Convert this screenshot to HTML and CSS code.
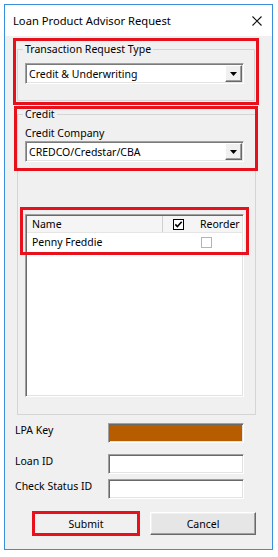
FILE: index.html
```html
<!DOCTYPE html>
<html lang="en">
<head>
  <meta charset="UTF-8">
  <meta name="viewport" content="width=device-width, initial-scale=1.0">
  <title>Loan Product Advisor Request</title>
  <link rel="stylesheet" href="styles.css">
</head>
<body>
  <div class="window">
    <div class="titlebar">
      <span class="title">Loan Product Advisor Request</span>
      <span class="close">
        <svg width="10" height="10" viewBox="0 0 10 10"><path d="M0.5 0.5 L9.5 9.5 M9.5 0.5 L0.5 9.5" stroke="#111" stroke-width="1.1" fill="none"/></svg>
      </span>
    </div>

    <div class="client">
      <fieldset class="group group-type">
        <legend>Transaction Request Type</legend>
        <div class="combo">
          <span class="combo-text">Credit &amp; Underwriting</span>
          <span class="combo-btn"><svg width="7" height="4" viewBox="0 0 7 4"><polygon points="0,0 7,0 3.5,4" fill="#000"/></svg></span>
        </div>
      </fieldset>

      <fieldset class="group group-credit">
        <legend>Credit</legend>
        <div class="credit-top">
          <label class="caption">Credit Company</label>
          <div class="combo">
            <span class="combo-text">CREDCO/Credstar/CBA</span>
            <span class="combo-btn"><svg width="7" height="4" viewBox="0 0 7 4"><polygon points="0,0 7,0 3.5,4" fill="#000"/></svg></span>
          </div>
        </div>

        <div class="listview">
          <div class="lv-head">
            <span class="col-name">Name</span>
            <span class="col-reorder">
              <svg class="head-check" width="11" height="11" viewBox="0 0 11 11"><rect x="0.5" y="0.5" width="10" height="10" fill="#fff" stroke="#000"/><path d="M2.3 5.4 L4.4 7.6 L8.7 2.8" stroke="#000" stroke-width="1.6" fill="none"/></svg>
              <span class="reorder-text">Reorder</span>
            </span>
          </div>
          <div class="lv-row">
            <span class="col-name">Penny Freddie</span>
            <span class="col-reorder"><span class="checkbox"></span></span>
          </div>
        </div>
      </fieldset>

      <div class="field field-key">
        <span class="field-label">LPA Key</span>
        <span class="textbox textbox-key"></span>
      </div>
      <div class="field field-loan">
        <span class="field-label">Loan ID</span>
        <span class="textbox"></span>
      </div>
      <div class="field field-status">
        <span class="field-label">Check Status ID</span>
        <span class="textbox"></span>
      </div>

      <div class="buttons">
        <button class="btn btn-submit">Submit</button>
        <button class="btn">Cancel</button>
      </div>
    </div>
  </div>
</body>
</html>
```

FILE: styles.css
```css
*, *::before, *::after { box-sizing: border-box; }
body { margin: 0; padding: 4px 0 0 4px; background: #fff; font-family: "Noto Sans", "Liberation Sans", sans-serif; font-size: 10.5px; color: #000; }

.window { width: 269px; height: 546px; border: 1px solid #3a8fdc; display: flex; flex-direction: column; }
.titlebar { height: 31px; flex: none; background: #fff; display: flex; align-items: center; justify-content: space-between; padding: 0 10px 0 8px; }
.title { font-size: 11.2px; line-height: 14px; }
.close { display: flex; margin-top: 1px; }

.client { flex: 1; background: #f0f0f0; padding: 6px 0 0 10px; }

/* group boxes */
.group { margin: 0 0 0 2px; border: 1px solid #d5d5d5; min-inline-size: 0; }
.group legend { padding: 0 2px; margin-left: -2px; line-height: 14px; }
.group-type { width: 238px; padding: 6px 10px 16px 7px; outline: 3px solid #e8101a; outline-offset: 1px; }
.group-credit { width: 239px; margin-top: 6px; padding: 0 10px 17px 7px; }

.credit-top { position: relative; }
.credit-top::before { content: ""; position: absolute; top: -20px; left: -11px; width: 244px; height: 65px; border: 3px solid #e8101a; }
.caption { display: block; line-height: 14px; margin-top: 5px; }

/* combo */
.combo { width: 219px; height: 21px; margin-top: 1px; background: #fff; display: flex; align-items: center; justify-content: space-between;
  border: 1px solid; border-color: #a0a0a0 #fff #fff #a0a0a0; box-shadow: inset 1px 1px #7a7a7a, inset -1px -1px #e3e3e3; }
.combo-text { padding-left: 3px; line-height: 14px; }
.combo-btn { width: 17px; height: 17px; margin-right: 1px; display: flex; align-items: center; justify-content: center; background: #f0f0f0;
  border: 1px solid; border-color: #fff #696969 #696969 #fff; box-shadow: inset -1px -1px #a0a0a0; }

/* list view */
.listview { position: relative; width: 219px; height: 183px; margin-top: 52px; background: #fff;
  border: 1px solid; border-color: #a0a0a0 #fff #fff #a0a0a0; box-shadow: inset 1px 1px #696969, inset -1px -1px #e3e3e3; padding: 1px; }
.listview::after { content: ""; position: absolute; top: -8px; left: -6px; width: 229px; height: 48px; border: 3px solid #e8101a; }
.lv-head { height: 17px; display: flex; align-items: center; background: #f5f5f5; border-bottom: 1px solid #e5e5e5; }
.lv-row { height: 18px; display: flex; align-items: center; }
.col-name { width: 136px; padding-left: 5px; line-height: 14px; }
.lv-head .col-name { height: 100%; display: flex; align-items: center; border-right: 1px solid #d0d0d0; }
.col-reorder { display: flex; align-items: center; }
.head-check { margin-left: 10px; }
.reorder-text { margin-left: 16px; line-height: 14px; }
.checkbox { width: 11px; height: 11px; margin-left: 38px; border: 1px solid #b4b4b4; background: #fff; }

/* fields */
.field { display: flex; align-items: flex-start; }
.field-key { margin-top: 8px; }
.field-loan { margin-top: 11px; }
.field-status { margin-top: 5px; }
.field-label { width: 93px; line-height: 14px; }
.textbox { width: 136px; height: 20px; background: #fff;
  border: 1px solid; border-color: #a0a0a0 #fff #fff #a0a0a0; box-shadow: inset 1px 1px #696969, inset -1px -1px #e3e3e3; }
.textbox-key { background: #b85c00; }

/* buttons */
.buttons { display: flex; gap: 11px; margin-top: 13px; padding-left: 18px; }
.btn { width: 106px; height: 23px; padding: 0; font: inherit; color: #000; background: #e6e6e6;
  border: 1px solid; border-color: #fff #696969 #696969 #fff; box-shadow: inset -1px -1px #a0a0a0, inset 1px 1px #f0f0f0; }
.btn-submit { background: #f0f0f0; outline: 3px solid #e8101a; outline-offset: -2px; }
```
